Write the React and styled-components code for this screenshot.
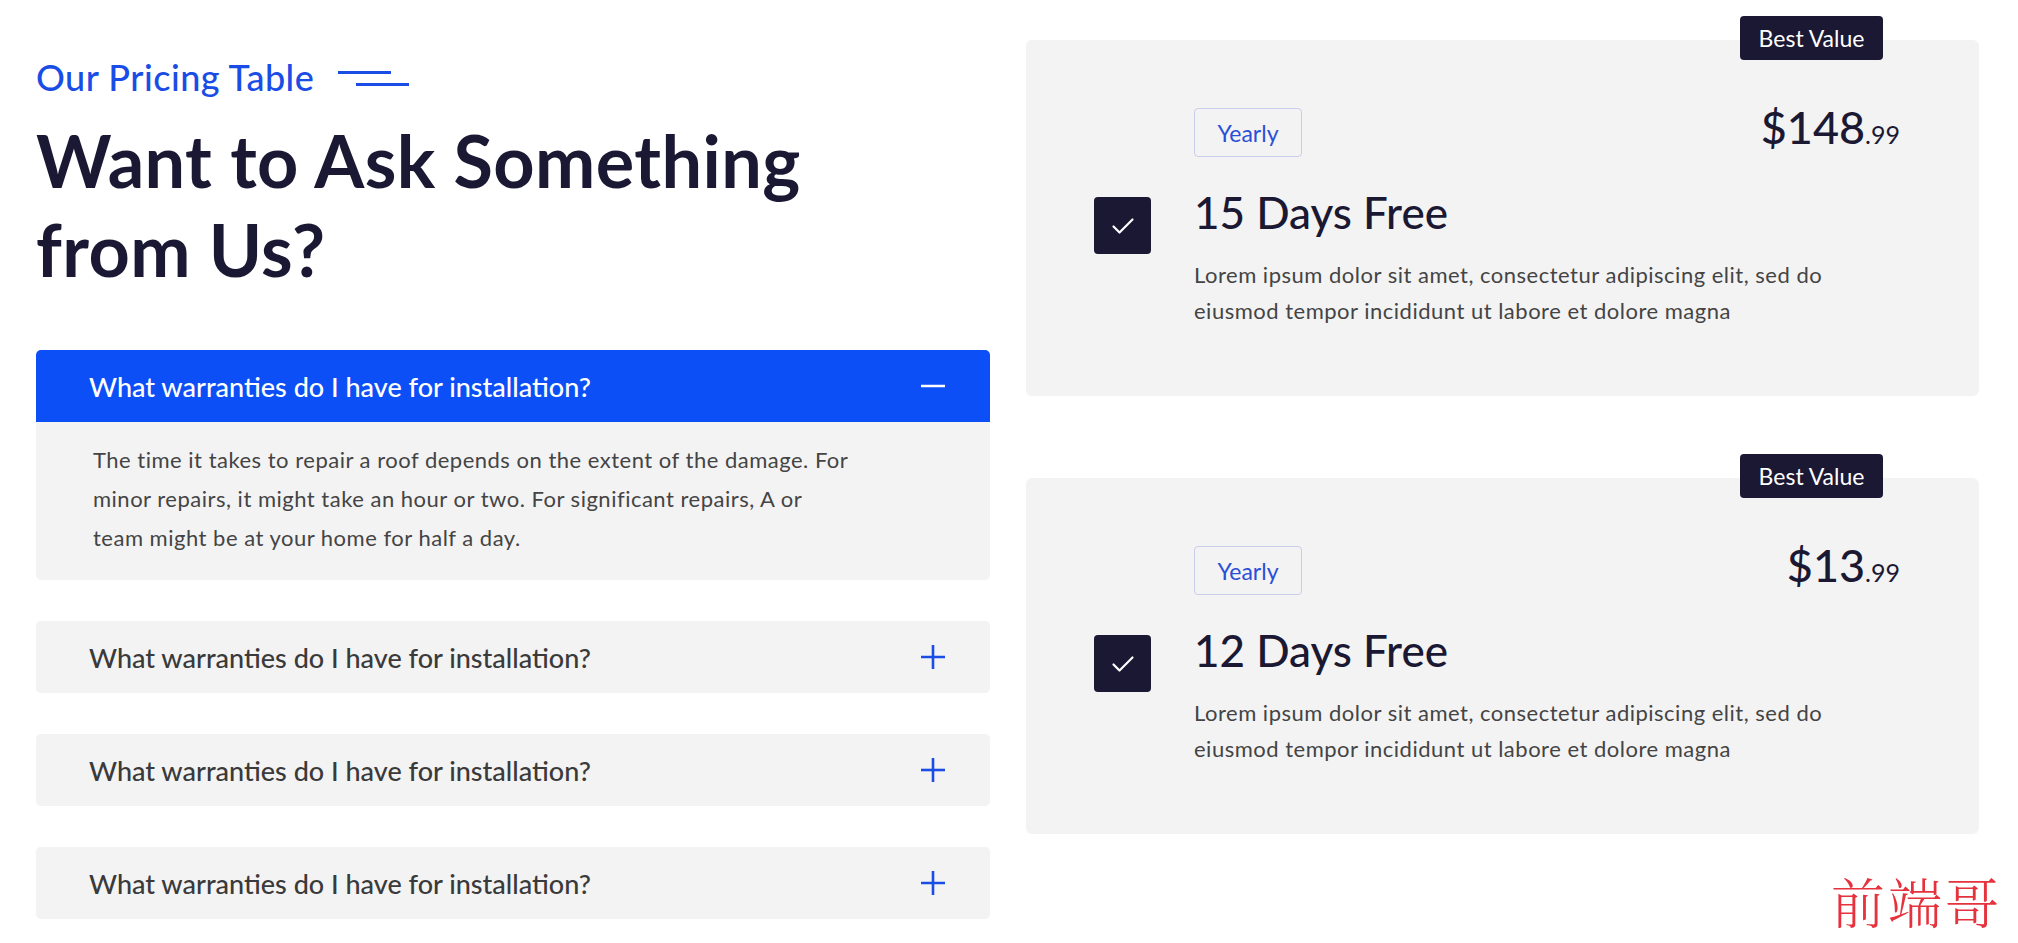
import React, { useState } from "react";
import styled, { createGlobalStyle } from "styled-components";

const GlobalStyle = createGlobalStyle`
  body {
    margin: 0;
    background: #ffffff;
    font-family: "Lato", "Noto Sans", sans-serif;
    color: #1b1833;
  }
  * {
    box-sizing: border-box;
  }
`;

const faqs = [
  {
    question: "What warranties do I have for installation?",
    answer:
      "The time it takes to repair a roof depends on the extent of the damage. For minor repairs, it might take an hour or two. For significant repairs, A or team might be at your home for half a day.",
  },
  {
    question: "What warranties do I have for installation?",
    answer:
      "The time it takes to repair a roof depends on the extent of the damage. For minor repairs, it might take an hour or two.",
  },
  {
    question: "What warranties do I have for installation?",
    answer:
      "The time it takes to repair a roof depends on the extent of the damage. For minor repairs, it might take an hour or two.",
  },
  {
    question: "What warranties do I have for installation?",
    answer:
      "The time it takes to repair a roof depends on the extent of the damage. For minor repairs, it might take an hour or two.",
  },
];

const plans = [
  { price: "148", cents: ".99", title: "15 Days Free" },
  { price: "13", cents: ".99", title: "12 Days Free" },
];

const lorem =
  "Lorem ipsum dolor sit amet, consectetur adipiscing elit, sed do eiusmod tempor incididunt ut labore et dolore magna";

const ToggleIcon = ({ open }) => (
  <svg width="24" height="24" viewBox="0 0 24 24" fill="none">
    <line x1="0" y1="12" x2="24" y2="12" stroke="currentColor" strokeWidth="2.6" />
    {!open && <line x1="12" y1="0" x2="12" y2="24" stroke="currentColor" strokeWidth="2.6" />}
  </svg>
);

const App = () => {
  const [openIndex, setOpenIndex] = useState(0);

  return (
    <Page>
      <GlobalStyle />
      <Section>
        <FaqColumn>
          <Subtitle>
            Our Pricing Table
            <Dashes>
              <Dash />
              <Dash $shift />
            </Dashes>
          </Subtitle>
          <Heading>
            Want to Ask Something
            <br />
            from Us?
          </Heading>

          <FaqList>
            {faqs.map((faq, i) => {
              const open = openIndex === i;
              return (
                <FaqItem key={i}>
                  <FaqHeader
                    $open={open}
                    onClick={() => setOpenIndex(open ? -1 : i)}
                  >
                    <span>{faq.question}</span>
                    <IconWrap $open={open}>
                      <ToggleIcon open={open} />
                    </IconWrap>
                  </FaqHeader>
                  {open && (
                    <FaqBody>
                      <p>{faq.answer}</p>
                    </FaqBody>
                  )}
                </FaqItem>
              );
            })}
          </FaqList>
        </FaqColumn>

        <PlanColumn>
          {plans.map((plan) => (
            <PlanCard key={plan.title}>
              <Badge>Best Value</Badge>
              <span />
              <PlanTop>
                <PeriodTag>Yearly</PeriodTag>
                <Price>
                  ${plan.price}
                  <small>{plan.cents}</small>
                </Price>
              </PlanTop>
              <CheckBox>
                <svg width="24" height="24" viewBox="0 0 24 24" fill="none">
                  <polyline
                    points="2.5 12.5 8.5 18.5 21.5 5.5"
                    stroke="#ffffff"
                    strokeWidth="2.2"
                    strokeLinecap="round"
                    strokeLinejoin="round"
                  />
                </svg>
              </CheckBox>
              <PlanInfo>
                <PlanTitle>{plan.title}</PlanTitle>
                <PlanText>{lorem}</PlanText>
              </PlanInfo>
            </PlanCard>
          ))}
        </PlanColumn>
      </Section>
      <Watermark>前端哥</Watermark>
    </Page>
  );
};

export default App;

const Page = styled.div`
  position: relative;
  min-height: 943px;
  overflow: hidden;
`;

const Section = styled.section`
  display: grid;
  grid-template-columns: 954px 953px;
  column-gap: 36px;
  align-items: start;
  padding: 40px 39px 0 36px;
`;

const FaqColumn = styled.div`
  display: flex;
  flex-direction: column;
`;

const Subtitle = styled.div`
  display: flex;
  align-items: center;
  gap: 24px;
  margin-top: 16px;
  font-size: 36px;
  font-weight: 500;
  letter-spacing: 0.5px;
  line-height: 43px;
  color: #1a4de6;
`;

const Dashes = styled.div`
  display: flex;
  flex-direction: column;
  gap: 9px;
  margin-top: 2px;
`;

const Dash = styled.span`
  display: block;
  width: 53px;
  height: 3px;
  background: #1a4de6;
  margin-left: ${(p) => (p.$shift ? "18px" : "0")};
`;

const Heading = styled.h1`
  margin: 17px 0 56px;
  font-size: 72px;
  font-weight: 700;
  letter-spacing: 0.4px;
  line-height: 89px;
  color: #1b1833;
`;

const FaqList = styled.div`
  display: flex;
  flex-direction: column;
  gap: 41px;
`;

const FaqItem = styled.div`
  border-radius: 5px;
  overflow: hidden;
  background: #f3f3f4;
`;

const FaqHeader = styled.button`
  display: flex;
  align-items: center;
  justify-content: space-between;
  width: 100%;
  height: 72px;
  padding: 0 45px 0 53px;
  border: none;
  border-radius: ${(p) => (p.$open ? "0" : "5px")};
  cursor: pointer;
  font-family: inherit;
  font-size: 27px;
  font-weight: 500;
  text-align: left;
  background: ${(p) => (p.$open ? "#0c4ff7" : "#f3f3f4")};
  color: ${(p) => (p.$open ? "#ffffff" : "#3a3a3a")};
`;

const IconWrap = styled.span`
  display: flex;
  color: ${(p) => (p.$open ? "#ffffff" : "#1a4de6")};
`;

const FaqBody = styled.div`
  padding: 18px 57px 23px;

  p {
    margin: 0;
    max-width: 759px;
    font-size: 22px;
    letter-spacing: 0.5px;
    line-height: 39px;
    color: #444444;
  }
`;

const PlanColumn = styled.div`
  display: flex;
  flex-direction: column;
  gap: 82px;
`;

const PlanCard = styled.div`
  position: relative;
  display: grid;
  grid-template-columns: 57px 1fr;
  column-gap: 43px;
  row-gap: 29px;
  padding: 68px 79px 67px 68px;
  background: #f3f3f4;
  border-radius: 6px;
`;

const Badge = styled.div`
  position: absolute;
  top: -24px;
  right: 96px;
  width: 143px;
  height: 44px;
  display: flex;
  align-items: center;
  justify-content: center;
  background: #1b1833;
  color: #ffffff;
  font-size: 23px;
  border-radius: 4px;
`;

const PlanTop = styled.div`
  display: flex;
  align-items: center;
  justify-content: space-between;
`;

const PeriodTag = styled.span`
  display: inline-flex;
  align-items: center;
  justify-content: center;
  width: 108px;
  height: 49px;
  border: 1px solid #c9cdea;
  border-radius: 4px;
  color: #2a4fd6;
  font-size: 23px;
`;

const Price = styled.div`
  font-size: 45px;
  font-weight: 500;
  color: #1b1833;
  margin-top: -12px;

  small {
    font-size: 25px;
    font-weight: 400;
  }
`;

const CheckBox = styled.div`
  width: 57px;
  height: 57px;
  margin-top: 11px;
  display: flex;
  align-items: center;
  justify-content: center;
  background: #1b1833;
  border-radius: 4px;
`;

const PlanInfo = styled.div`
  display: flex;
  flex-direction: column;
  gap: 18px;
`;

const PlanTitle = styled.h3`
  margin: 0;
  font-size: 44px;
  font-weight: 500;
  line-height: 53px;
  color: #1b1833;
`;

const PlanText = styled.p`
  margin: 0;
  max-width: 680px;
  font-size: 22px;
  letter-spacing: 0.5px;
  line-height: 36px;
  color: #444444;
`;

const Watermark = styled.div`
  position: absolute;
  right: 16px;
  bottom: 4px;
  font-family: "Noto Serif CJK SC", "Noto Sans CJK SC", serif;
  font-size: 54px;
  font-weight: 300;
  color: #e5323c;
  letter-spacing: 3px;
`;
